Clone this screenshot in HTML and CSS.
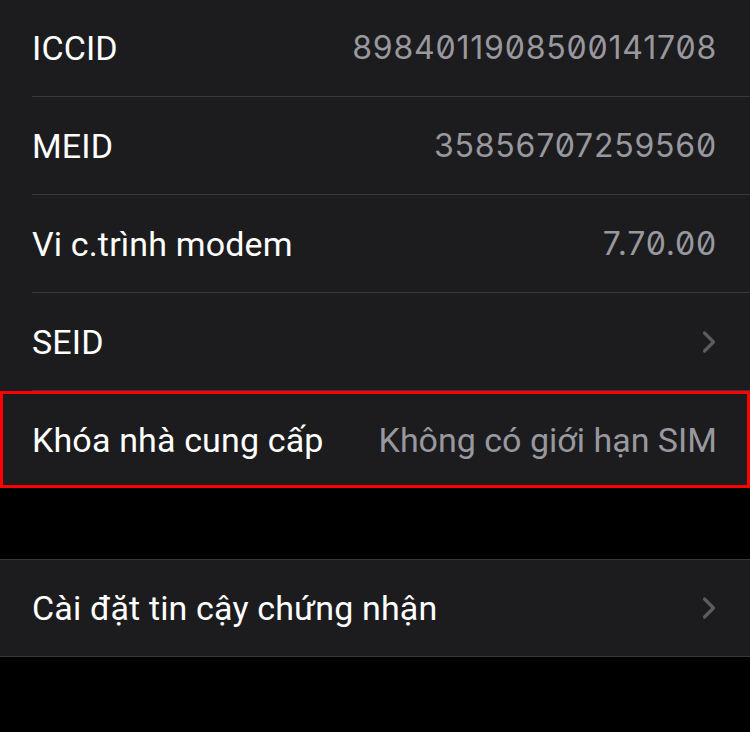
FILE: index.html
```html
<!DOCTYPE html>
<html lang="vi">
<head>
<meta charset="utf-8">
<title>Giới thiệu</title>
<link rel="stylesheet" href="styles.css">
</head>
<body>
<main class="screen">
  <section class="group group-first">
    <div class="row">
      <div class="row-inner">
        <span class="label">ICCID</span>
        <span class="value num">8984011908500141708</span>
      </div>
    </div>
    <div class="row">
      <div class="row-inner">
        <span class="label">MEID</span>
        <span class="value num">35856707259560</span>
      </div>
    </div>
    <div class="row">
      <div class="row-inner">
        <span class="label">Vi c.trình modem</span>
        <span class="value num">7.70.00</span>
      </div>
    </div>
    <div class="row">
      <div class="row-inner">
        <span class="label">SEID</span>
        <svg class="chevron" viewBox="0 0 14 24" width="14" height="24" aria-hidden="true"><path d="M2.5 3 L11.5 12 L2.5 21" fill="none" stroke="currentColor" stroke-width="3.2" stroke-linecap="round" stroke-linejoin="round"/></svg>
      </div>
    </div>
    <div class="row row-last highlight">
      <div class="row-inner">
        <span class="label">Khóa nhà cung cấp</span>
        <span class="value">Không có giới hạn SIM</span>
      </div>
    </div>
  </section>

  <section class="group group-second">
    <div class="row row-last">
      <div class="row-inner">
        <span class="label">Cài đặt tin cậy chứng nhận</span>
        <svg class="chevron" viewBox="0 0 14 24" width="14" height="24" aria-hidden="true"><path d="M2.5 3 L11.5 12 L2.5 21" fill="none" stroke="currentColor" stroke-width="3.2" stroke-linecap="round" stroke-linejoin="round"/></svg>
      </div>
    </div>
  </section>
</main>
</body>
</html>
```

FILE: styles.css
```css
html, body {
  margin: 0;
  padding: 0;
  background: #000;
}

body {
  font-family: Roboto, "Noto Sans", "Liberation Sans", sans-serif;
  -webkit-font-smoothing: antialiased;
}

.screen {
  width: 750px;
  height: 732px;
  overflow: hidden;
  background: #000;
}

.group {
  background: #1c1c1e;
}

.group-first {
  margin-top: -1px;
}

.group-second {
  margin-top: 71px;
  border-top: 1px solid #38383a;
  border-bottom: 1px solid #38383a;
}

.row {
  display: flex;
  padding-left: 32px;
}

.row-inner {
  flex: 1;
  height: 97px;
  display: flex;
  align-items: center;
  justify-content: space-between;
  padding-right: 33px;
  border-bottom: 1px solid #38383a;
}

.row-last .row-inner {
  border-bottom: none;
}

.group-second .row-inner {
  height: 96px;
}

.label {
  color: #ffffff;
  font-size: 34px;
  letter-spacing: 0.15px;
  white-space: nowrap;
}

.value {
  color: #98989e;
  font-size: 34px;
  white-space: nowrap;
}

.value.num {
  font-family: Inter, "DejaVu Sans", sans-serif;
  font-size: 32px;
  letter-spacing: 0.8px;
  font-feature-settings: "zero" 1;
}

.chevron {
  color: #5b5b60;
  display: block;
  margin-right: 1px;
}

.highlight {
  box-shadow: inset 0 0 0 3px #ff0000;
}
```
